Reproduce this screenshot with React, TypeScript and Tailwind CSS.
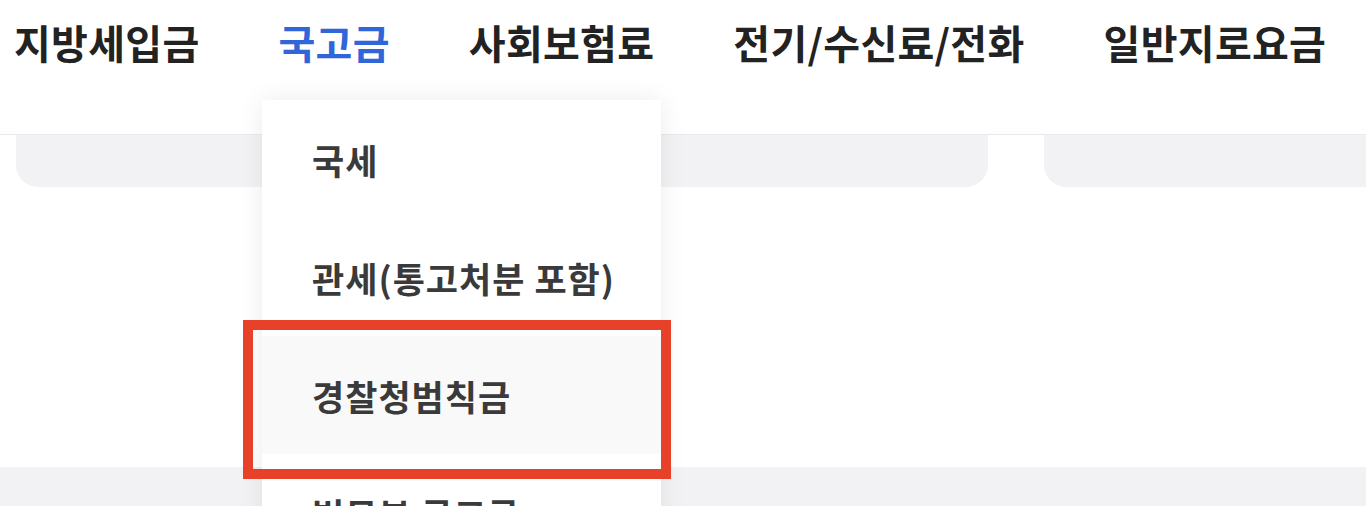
import React from 'react';

const tabs = ['지방세입금', '국고금', '사회보험료', '전기/수신료/전화', '일반지로요금'];
const subItems = ['국세', '관세(통고처분 포함)', '경찰청범칙금', '법무부 국고금'];

export default function App() {
  return (
    <div
      className="relative w-[1366px] h-[506px] overflow-hidden bg-white"
      style={{ fontFamily: '"Noto Sans CJK KR", "Noto Sans", sans-serif' }}
    >
      {/* Top tabs */}
      <header className="h-[135px] border-b border-[#e9e9eb]">
        <nav className="flex items-center h-[84px] pl-[14px] gap-[79px]">
          {tabs.map((t) => (
            <span
              key={t}
              className={`text-[40px] font-bold leading-none tracking-[0.3px] ${
                t === '국고금' ? 'text-[#2f66d8]' : 'text-[#222222]'
              }`}
            >
              {t}
            </span>
          ))}
        </nav>
      </header>

      {/* Card strip */}
      <div className="flex">
        <div className="ml-[16px] w-[972px] h-[52px] rounded-b-[22px] bg-[#f2f2f4]" />
        <div className="ml-[56px] flex-1 h-[52px] rounded-bl-[22px] bg-[#f2f2f4]" />
      </div>

      <div className="h-[280px]" />
      <div className="h-[40px] bg-[#f2f2f4]" />

      {/* Dropdown menu */}
      <div className="absolute left-[262px] top-[100px] w-[399px] h-[480px] bg-white shadow-[0_0_24px_rgba(0,0,0,0.08)]">
        {subItems.map((s, i) => (
          <div
            key={s}
            className={`flex items-center h-[118px] pl-[50px] text-[35px] font-semibold leading-none text-[#3a3a3a] tracking-[1px] ${
              i === 2 ? 'bg-[#f9f9f9]' : ''
            }`}
          >
            {s}
          </div>
        ))}
      </div>

      {/* Highlight box */}
      <div className="absolute left-[243px] top-[320px] w-[428px] h-[159px] border-[10px] border-[#e8412a]" />
    </div>
  );
}
